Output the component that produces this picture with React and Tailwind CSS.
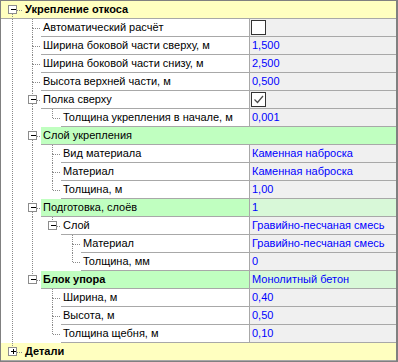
import React from "react";

const tree = [
  {
    name: "Укрепление откоса", kind: "root", bold: true, open: true,
    children: [
      { name: "Автоматический расчёт", check: false },
      { name: "Ширина боковой части сверху, м", value: "1,500" },
      { name: "Ширина боковой части снизу, м", value: "2,500" },
      { name: "Высота верхней части, м", value: "0,500" },
      {
        name: "Полка сверху", check: true, open: true,
        children: [{ name: "Толщина укрепления в начале, м", value: "0,001" }],
      },
      {
        name: "Слой укрепления", kind: "groupfull", open: true,
        children: [
          { name: "Вид материала", value: "Каменная наброска" },
          { name: "Материал", value: "Каменная наброска" },
          { name: "Толщина, м", value: "1,00" },
        ],
      },
      {
        name: "Подготовка, слоёв", kind: "group", value: "1", open: true,
        children: [
          {
            name: "Слой", value: "Гравийно-песчаная смесь", open: true,
            children: [
              { name: "Материал", value: "Гравийно-песчаная смесь" },
              { name: "Толщина, мм", value: "0" },
            ],
          },
        ],
      },
      {
        name: "Блок упора", kind: "group", bold: true, value: "Монолитный бетон", open: true,
        children: [
          { name: "Ширина, м", value: "0,40" },
          { name: "Высота, м", value: "0,50" },
          { name: "Толщина щебня, м", value: "0,10" },
        ],
      },
    ],
  },
  { name: "Детали", kind: "root", bold: true, open: false, children: [{ name: "x" }] },
];

function flatten(nodes, level, anc, out) {
  nodes.forEach((n, i) => {
    const last = i === nodes.length - 1;
    const first = level === 0 && i === 0;
    out.push({ ...n, level, anc: [...anc], last, first });
    if (n.open && n.children) flatten(n.children, level + 1, [...anc, !last], out);
  });
  return out;
}

const rows = flatten(tree, 0, [], []);
const LINE = "#8a8a8a";

function Gutter({ row, width, height }) {
  const cx = (k) => 11 + 20 * k + 0.5;
  const mid = 9;
  const els = [];
  row.anc.forEach((on, k) => {
    if (on) els.push(<line key={"a" + k} x1={cx(k)} x2={cx(k)} y1={0} y2={height} stroke={LINE} strokeDasharray="1 1" />);
  });
  const c = cx(row.level);
  const hasBox = !!row.children;
  if (!row.first) els.push(<line key="t" x1={c} x2={c} y1={0} y2={mid} stroke={LINE} strokeDasharray="1 1" />);
  if (!row.last) els.push(<line key="b" x1={c} x2={c} y1={mid} y2={height} stroke={LINE} strokeDasharray="1 1" />);
  els.push(<line key="h" x1={c} x2={width} y1={mid + 0.5} y2={mid + 0.5} stroke={LINE} strokeDasharray="1 1" />);
  if (hasBox) {
    const bx = c - 4.5;
    els.push(<rect key="box" x={bx + 0.5} y={4.5} width={8} height={8} fill="#ffffff" stroke="#8c8c8c" />);
    els.push(<rect key="m" x={bx + 3} y={8} width={5} height={1} fill="#000000" />);
    if (!row.open) els.push(<rect key="p" x={bx + 5} y={6} width={1} height={5} fill="#000000" />);
  }
  return (
    <svg width={width} height={height} className="shrink-0 block" shapeRendering="crispEdges">
      {els}
    </svg>
  );
}

function CheckBox({ checked }) {
  return (
    <div className="ml-[1px] w-[15px] h-[15px] border border-[#333333] bg-white relative">
      {checked && (
        <svg width="13" height="13" className="absolute left-0 top-0">
          <polyline points="2.5,6.5 5.5,9.5 11,3" fill="none" stroke="#4a4a4a" strokeWidth="1.2" />
        </svg>
      )}
    </div>
  );
}

function Row({ row }) {
  const nameCls = row.bold ? "font-bold" : "";
  if (row.kind === "root") {
    return (
      <div className="flex h-[18px] bg-[#ffffc0] border-b border-[#a8a8a8]">
        <Gutter row={row} width={22} height={17} />
        <div className={"pl-[2px] leading-[17px] text-black " + nameCls}>{row.name}</div>
      </div>
    );
  }
  const gw = 20 * row.level + 20;
  let nameBg = "bg-white";
  if (row.kind === "group" || row.kind === "groupfull") nameBg = "bg-[#c0ffc0]";
  const valueBg = row.kind === "group" ? "bg-[#d8f8d8]" : "bg-[#f0f0f0]";
  return (
    <div className="flex h-[18px]">
      <Gutter row={row} width={gw} height={18} />
      <div className={"flex-1 flex border-b border-[#a8a8a8] " + nameBg}>
        <div className={"flex-1 pl-[2px] leading-[17px] text-black whitespace-nowrap overflow-hidden " + nameCls}>
          {row.name}
        </div>
        {row.kind !== "groupfull" && (
          <div className={"w-[147px] shrink-0 border-l border-[#a8a8a8] flex items-center text-[#0000ff] leading-[17px] " + valueBg}>
            {row.check !== undefined ? (
              <CheckBox checked={row.check} />
            ) : (
              <span className="pl-[2px] whitespace-nowrap">{row.value}</span>
            )}
          </div>
        )}
      </div>
    </div>
  );
}

export default function App() {
  return (
    <div
      className="w-[398px] h-[362px] bg-white border-t border-l border-b border-r-2 border-[#808080] text-[11px] overflow-hidden"
      style={{ fontFamily: '"Liberation Sans", Arial, sans-serif' }}
    >
      {rows.map((r, i) => (
        <Row key={i} row={r} />
      ))}
    </div>
  );
}
